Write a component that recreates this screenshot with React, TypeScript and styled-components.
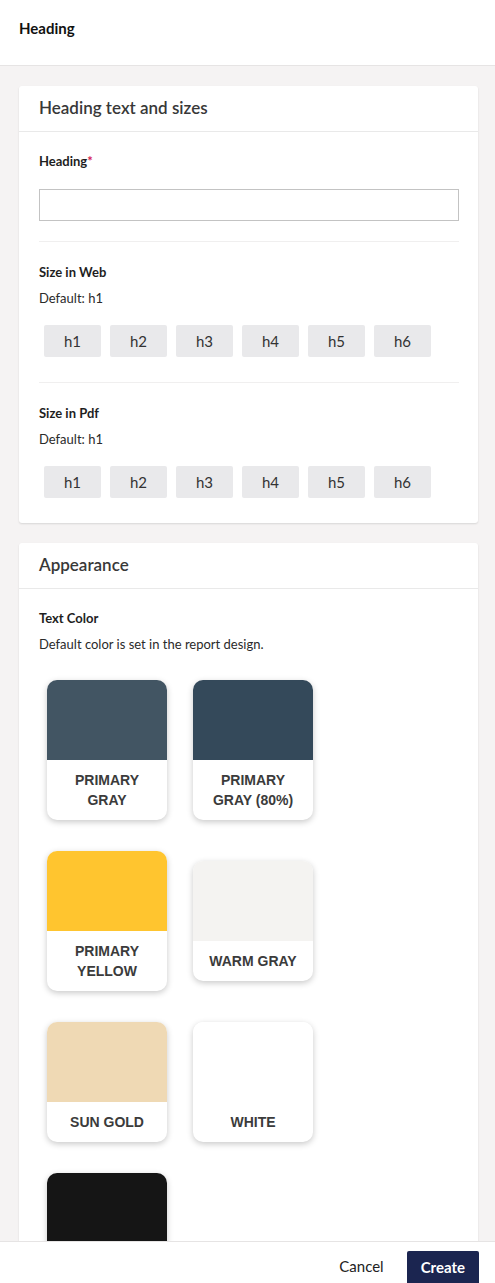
import React from 'react';
import styled, { createGlobalStyle } from 'styled-components';

const GlobalStyle = createGlobalStyle`
  html, body {
    margin: 0;
    padding: 0;
    background: #f5f3f3;
    font-family: Lato, 'Noto Sans', sans-serif;
    color: #222;
  }
  * { box-sizing: border-box; }
`;

const Page = styled.div`
  height: 100vh;
  display: flex;
  flex-direction: column;
  overflow: hidden;
`;

const TopBar = styled.div`
  height: 66px;
  flex-shrink: 0;
  background: #fff;
  border-bottom: 1px solid #e6e4e4;
  display: flex;
  align-items: center;
  padding: 0 19px 9px;
  font-size: 15px;
  font-weight: 700;
  color: #111;
`;

const Body = styled.div`
  flex: 1;
  overflow: hidden;
  padding: 20px 17px 0 19px;
  display: flex;
  flex-direction: column;
  gap: 20px;
`;

const Card = styled.section`
  background: #fff;
  border-radius: 3px;
  box-shadow: 0 1px 2px rgba(0, 0, 0, 0.12);
  flex-shrink: 0;
`;

const CardTitle = styled.div`
  height: 46px;
  display: flex;
  align-items: center;
  padding: 0 20px 2px;
  font-size: 17px;
  font-weight: 600;
  color: #383838;
  border-bottom: 1px solid #e9e9e9;
`;

const CardBody = styled.div`
  padding: 21px 19px 25px 20px;
`;

const Label = styled.div`
  font-size: 13px;
  font-weight: 700;
  line-height: 16px;
  color: #1e1e1e;
  span {
    color: #d6174f;
  }
`;

const Hint = styled.div`
  font-size: 13px;
  line-height: 16px;
  color: #2a2a2a;
  margin-top: 10px;
`;

const TextInput = styled.input`
  display: block;
  width: 100%;
  height: 32px;
  margin-top: 20px;
  border: 1px solid #c3c3c3;
  border-radius: 0;
  padding: 0 6px;
  font-family: Lato, sans-serif;
  font-size: 14px;
  outline: none;
  caret-color: #111;
`;

const Divider = styled.hr<{ $top?: number }>`
  border: 0;
  border-top: 1px solid #f0efef;
  margin: ${(p) => p.$top ?? 20}px 0 22px;
`;

const SizeRow = styled.div`
  display: flex;
  gap: 9px;
  margin-top: 19px;
  padding-left: 5px;
`;

const SizeButton = styled.button`
  width: 57px;
  height: 32px;
  border: 0;
  border-radius: 2px;
  background: #e9e9eb;
  font-family: Lato, sans-serif;
  font-size: 15px;
  color: #333;
  padding: 0;
  cursor: pointer;
`;

const SwatchGrid = styled.div`
  display: grid;
  grid-template-columns: 120px 120px;
  column-gap: 26px;
  row-gap: 31px;
  align-items: center;
  margin-top: 28px;
  padding-left: 8px;
`;

const Swatch = styled.div`
  width: 120px;
  border-radius: 10px;
  overflow: hidden;
  background: #fff;
  box-shadow: 0 2px 6px rgba(0, 0, 0, 0.22);
`;

const SwatchColor = styled.div<{ $color: string }>`
  height: 80px;
  background: ${(p) => p.$color};
`;

const SwatchName = styled.div`
  padding: 10px 15px;
  text-align: center;
  font-family: 'Liberation Sans', Arial, sans-serif;
  font-size: 14px;
  font-weight: 700;
  line-height: 20px;
  color: #3b3b3b;
  text-transform: uppercase;
`;

const Footer = styled.div`
  height: 42px;
  flex-shrink: 0;
  background: #fff;
  border-top: 1px solid #e6e4e4;
  display: flex;
  align-items: flex-start;
  justify-content: flex-end;
  gap: 23px;
  padding: 9px 16px 0;
  overflow: hidden;
`;

const CancelButton = styled.button`
  height: 30px;
  border: 0;
  background: none;
  font-family: Lato, sans-serif;
  font-size: 15px;
  color: #222;
  padding: 0;
  cursor: pointer;
`;

const CreateButton = styled.button`
  height: 36px;
  padding: 0 14px 4px;
  border: 0;
  border-radius: 2px;
  background: #1b2550;
  color: #fff;
  font-family: Lato, sans-serif;
  font-size: 15px;
  font-weight: 700;
  cursor: pointer;
`;

const sizes = ['h1', 'h2', 'h3', 'h4', 'h5', 'h6'];

const colors = [
  { name: 'Primary Gray', value: '#425563' },
  { name: 'Primary Gray (80%)', value: '#34495a' },
  { name: 'Primary Yellow', value: '#ffc52f' },
  { name: 'Warm Gray', value: '#f4f3f1' },
  { name: 'Sun Gold', value: '#efd9b4' },
  { name: 'White', value: '#ffffff' },
  { name: 'Black', value: '#151515' },
];

const SizePicker: React.FC<{ title: string }> = ({ title }) => (
  <>
    <Label>{title}</Label>
    <Hint>Default: h1</Hint>
    <SizeRow>
      {sizes.map((s) => (
        <SizeButton key={s} type="button">
          {s}
        </SizeButton>
      ))}
    </SizeRow>
  </>
);

const App: React.FC = () => {
  return (
    <>
      <GlobalStyle />
      <Page>
        <TopBar>Heading</TopBar>
        <Body>
          <Card>
            <CardTitle>Heading text and sizes</CardTitle>
            <CardBody>
              <Label>
                Heading<span>*</span>
              </Label>
              <TextInput autoFocus />
              <Divider />
              <SizePicker title="Size in Web" />
              <Divider $top={25} />
              <SizePicker title="Size in Pdf" />
            </CardBody>
          </Card>
          <Card>
            <CardTitle>Appearance</CardTitle>
            <CardBody>
              <Label>Text Color</Label>
              <Hint>Default color is set in the report design.</Hint>
              <SwatchGrid>
                {colors.map((c) => (
                  <Swatch key={c.name}>
                    <SwatchColor $color={c.value} />
                    <SwatchName>{c.name}</SwatchName>
                  </Swatch>
                ))}
              </SwatchGrid>
            </CardBody>
          </Card>
        </Body>
        <Footer>
          <CancelButton type="button">Cancel</CancelButton>
          <CreateButton type="button">Create</CreateButton>
        </Footer>
      </Page>
    </>
  );
};

export default App;
